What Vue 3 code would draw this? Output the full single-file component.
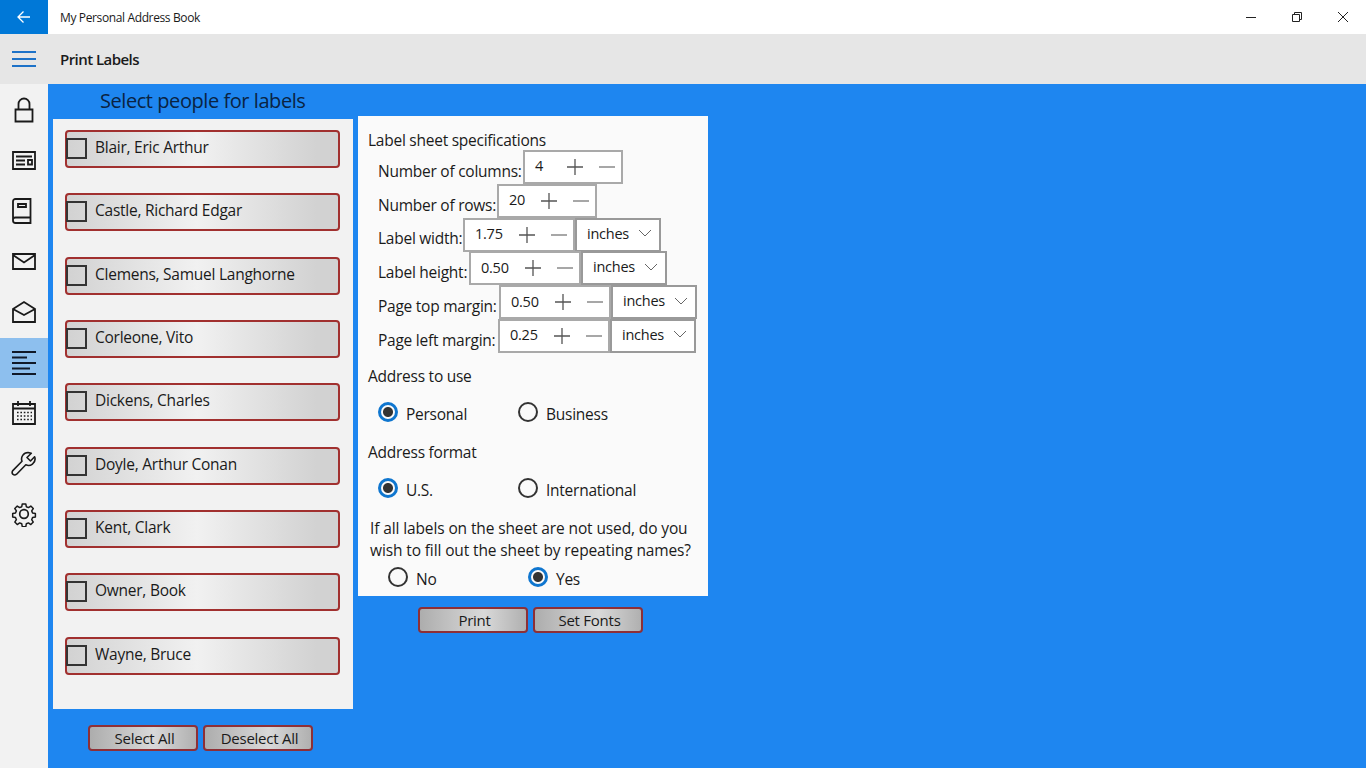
<script setup>
const people = ['Blair, Eric Arthur','Castle, Richard Edgar','Clemens, Samuel Langhorne','Corleone, Vito','Dickens, Charles','Doyle, Arthur Conan','Kent, Clark','Owner, Book','Wayne, Bruce']
const specs = [
  { label: 'Number of columns:', w: 145, value: '4', stepper: 100, pad: 10, unit: false },
  { label: 'Number of rows:', w: 119, value: '20', stepper: 100, pad: 10, unit: false },
  { label: 'Label width:', w: 85, value: '1.75', stepper: 112, pad: 10, unit: true },
  { label: 'Label height:', w: 91, value: '0.50', stepper: 112, pad: 10, unit: true },
  { label: 'Page top margin:', w: 121, value: '0.50', stepper: 112, pad: 10, unit: true },
  { label: 'Page left margin:', w: 120, value: '0.25', stepper: 112, pad: 10, unit: true }
]
</script>

<template>
  <div class="app">
    <header class="titlebar">
      <div class="back">
        <svg width="16" height="16" viewBox="0 0 16 16" fill="none" stroke="#fff" stroke-width="1.3"><path d="M14 8H2M7.500 2.500 2 8l5.500 5.500"/></svg>
      </div>
      <span class="apptitle">My Personal Address Book</span>
      <div class="winctrls">
        <svg width="12" height="12" viewBox="0 0 12 12" fill="none" stroke="#222" stroke-width="1"><path d="M1 6.500h10"/></svg>
        <svg width="12" height="12" viewBox="0 0 12 12" fill="none" stroke="#222" stroke-width="1"><path d="M1.500 3.500h7v7h-7zM3.500 3.500v-2h7v7h-2"/></svg>
        <svg width="12" height="12" viewBox="0 0 12 12" fill="none" stroke="#222" stroke-width="1"><path d="M1 1l10 10M11 1 1 11"/></svg>
      </div>
    </header>
    <div class="cmdbar">
      <div class="burger"><span></span><span></span><span></span></div>
      <span class="pagetitle">Print Labels</span>
    </div>
    <div class="body">
      <nav class="nav">
        <div class="navitem">
          <svg width="24" height="26" viewBox="0 0 24 26" fill="none" stroke="#1a1a1a" stroke-width="1.800"><path d="M3.500 12.500h17v12h-17zM6.500 12.500V7a5.500 5.500 0 0 1 11 0v5.500"/></svg>
        </div>
        <div class="navitem">
          <svg width="24" height="20" viewBox="0 0 24 20" fill="none" stroke="#1a1a1a" stroke-width="1.800"><path d="M1 1h22v17H1zM4 5.500h16M4 9.500h9M4 13.500h9"/><path d="M16 9h4v4.500h-4z"/></svg>
        </div>
        <div class="navitem">
          <svg class="bookicon" width="20" height="26" viewBox="0 0 20 26" fill="none" stroke="#1a1a1a" stroke-width="1.800"><path d="M3.500 1h15v24H3.500A2.500 2.500 0 0 1 1 22.500V3.500A2.500 2.500 0 0 1 3.500 1zM1 21.500c0-1 1-2 2.500-2h15M6 6h8v3H6z"/></svg>
        </div>
        <div class="navitem">
          <svg width="24" height="18" viewBox="0 0 24 18" fill="none" stroke="#1a1a1a" stroke-width="1.800"><path d="M1 1h22v15H1zM1 2l11 7.500L23 2"/></svg>
        </div>
        <div class="navitem">
          <svg width="24" height="24" viewBox="0 0 24 24" fill="none" stroke="#1a1a1a" stroke-width="1.800"><path d="M1 9 12 2l11 7v13H1zM1 9l11 6 11-6"/></svg>
        </div>
        <div class="navitem active">
          <svg width="24" height="24" viewBox="0 0 24 24" fill="none" stroke="#101828" stroke-width="2"><path d="M0 1h24M0 6.500h15M0 12h24M0 17.500h18M0 23h24"/></svg>
        </div>
        <div class="navitem">
          <svg width="24" height="24" viewBox="0 0 24 24" fill="none" stroke="#1a1a1a" stroke-width="1.800"><path d="M1 3h22v20H1zM1 7.500h22M6 0v5M18 0v5"/><path stroke-width="1.600" stroke-dasharray="1.600 1.800" d="M5 11.500h15M5 15h15M5 18.500h15"/></svg>
        </div>
        <div class="navitem">
          <svg width="26" height="26" viewBox="0 0 26 26" fill="none" stroke="#1a1a1a" stroke-width="1.600" stroke-linejoin="round"><path d="M17 1.500a6.500 6.500 0 0 0-6 8.800L1.800 19.600a3 3 0 0 0 0 3.600 3 3 0 0 0 3.800 0l9.200-9.400A6.500 6.500 0 0 0 24 7l-.4-1.200L19.500 10 16 6.500l4.300-4.200z"/></svg>
        </div>
        <div class="navitem">
          <svg width="26" height="26" viewBox="0 0 26 26" fill="none" stroke="#1a1a1a" stroke-width="1.700" stroke-linejoin="round"><circle cx="13" cy="13" r="4.300"/><path d="M11 1.500h4l.6 3.200 2.400 1 2.700-1.800 2.800 2.800-1.800 2.700 1 2.400 3.200.6v4l-3.200.6-1 2.400 1.800 2.700-2.800 2.800-2.700-1.800-2.400 1-.6 3.200h-4l-.6-3.200-2.400-1-2.700 1.800-2.800-2.800 1.800-2.700-1-2.400-3.200-.6v-4l3.200-.6 1-2.400-1.800-2.700 2.800-2.800 2.700 1.800 2.400-1z" transform="translate(1.600 1.600) scale(.88)"/></svg>
        </div>
      </nav>
      <main class="main">
        <section class="left">
          <h2 class="heading">Select people for labels</h2>
          <div class="list">
            <div v-for="p in people" :key="p" class="person">
              <span class="check"></span>
              <span class="pname">{{ p }}</span>
            </div>
          </div>
          <div class="actions leftactions">
            <button class="btn">Select All</button>
            <button class="btn">Deselect All</button>
          </div>
        </section>
        <section class="right">
          <div class="sheet">
            <div class="caption">Label sheet specifications</div>
            <div class="specs">
              <div v-for="s in specs" :key="s.label" class="spec">
                <span class="speclabel" :style="{ width: s.w + 'px' }">{{ s.label }}</span>
                <div class="stepper" :style="{ width: s.stepper + 'px' }">
                  <span class="val" :style="{ paddingLeft: s.pad + 'px' }">{{ s.value }}</span>
                  <svg class="pm" width="16" height="16" viewBox="0 0 16 16" stroke="#555" stroke-width="1.300"><path d="M0 8h16M8 0v16"/></svg>
                  <svg class="pm minus" width="16" height="16" viewBox="0 0 16 16" stroke="#777" stroke-width="1.300"><path d="M0 8h16"/></svg>
                </div>
                <div v-if="s.unit" class="unit">
                  <span>inches</span>
                  <svg width="14" height="8" viewBox="0 0 14 8" fill="none" stroke="#666" stroke-width="1"><path d="M1 1l6 6 6-6"/></svg>
                </div>
              </div>
            </div>
            <div class="caption c2">Address to use</div>
            <div class="radios">
              <div class="radio"><span class="dot on"></span><span>Personal</span></div>
              <div class="radio"><span class="dot"></span><span>Business</span></div>
            </div>
            <div class="caption c3">Address format</div>
            <div class="radios">
              <div class="radio"><span class="dot on"></span><span>U.S.</span></div>
              <div class="radio"><span class="dot"></span><span>International</span></div>
            </div>
            <p class="question">If all labels on the sheet are not used, do you<br>wish to fill out the sheet by repeating names?</p>
            <div class="radios r3">
              <div class="radio"><span class="dot"></span><span>No</span></div>
              <div class="radio"><span class="dot on"></span><span>Yes</span></div>
            </div>
          </div>
          <div class="actions rightactions">
            <button class="btn">Print</button>
            <button class="btn">Set Fonts</button>
          </div>
        </section>
      </main>
    </div>
  </div>
</template>

<style>
html, body { margin: 0; background: #1e86f0; }
</style>

<style scoped>
.app { width: 1366px; height: 768px; display: flex; flex-direction: column; overflow: hidden; font-family: "Open Sans", "Noto Sans", sans-serif; color: #1a1a1a; }
.titlebar { height: 34px; background: #fff; display: flex; align-items: center; flex: none; }
.back { width: 48px; height: 34px; background: #0078d7; display: flex; align-items: center; justify-content: center; }
.apptitle { margin-left: 12px; font-size: 12px; letter-spacing: -.37px; }
.winctrls { margin-left: auto; display: flex; gap: 34px; padding-right: 17px; align-items: center; }
.cmdbar { height: 50px; background: #e6e6e6; display: flex; align-items: center; flex: none; }
.burger { width: 48px; display: flex; flex-direction: column; align-items: center; gap: 5.400px; }
.burger span { display: block; width: 24px; height: 2px; background: #1d72c8; }
.pagetitle { margin-left: 12px; font-size: 15px; font-weight: 600; letter-spacing: -.55px; }
.body { flex: 1; display: flex; min-height: 0; }
.nav { width: 48px; background: #f2f2f2; display: flex; flex-direction: column; flex: none; padding-top: 1px; }
.navitem { height: 50.500px; display: flex; align-items: center; justify-content: center; }
.navitem.active { background: #8dbfee; }
.bookicon { margin-right: 4px; }
.main { flex: 1; background: #1e86f0; display: flex; padding-left: 5px; gap: 5px; align-items: flex-start; }
.left { width: 300px; display: flex; flex-direction: column; }
.heading { margin: 0; height: 35px; padding-left: 47px; font-size: 20px; font-weight: 400; line-height: 33px; color: #0a2342; letter-spacing: -.44px; }
.list { height: 590px; box-sizing: border-box; background: #f2f2f2; padding: 11px 13px 0 12px; display: flex; flex-direction: column; gap: 25.330px; }
.person { height: 38px; box-sizing: border-box; border: 2px solid #a1302f; border-radius: 4px; background: linear-gradient(90deg, #d2d2d2 0%, #f1f1f1 48%, #d2d2d2 92%); display: flex; align-items: flex-start; }
.check { width: 21px; height: 21px; box-sizing: border-box; border: 2px solid #333; margin: 6px 0 0 -1px; flex: none; }
.pname { margin-left: 8px; font-size: 15.500px; line-height: 31px; letter-spacing: -.25px; white-space: nowrap; }
.actions { display: flex; gap: 5px; }
.leftactions { padding: 16px 0 0 35px; }
.rightactions { padding: 11px 0 0 60px; }
.btn { width: 110px; height: 26px; box-sizing: border-box; padding: 0 0 0 3px; border: 2px solid #8e2f36; border-radius: 4px; background: linear-gradient(90deg, #adadad 0%, #d9d9d9 60%, #b0b0b0 100%); font: inherit; font-size: 15px; letter-spacing: -.25px; color: #1a1a1a; }
.right { width: 350px; padding-top: 32px; }
.sheet { height: 480px; box-sizing: border-box; background: #fafafa; padding: 13px 0 0 10px; font-size: 15.500px; letter-spacing: -.25px; }
.caption { line-height: 22px; }
.specs { display: flex; flex-direction: column; padding: 0 0 0 10px; margin-top: -1px; }
.spec { height: 33.800px; display: flex; align-items: center; }
.speclabel { line-height: 22px; padding-top: 8px; white-space: nowrap; flex: none; }
.stepper { height: 34px; box-sizing: border-box; border: 2px solid #a9a9a9; background: #fff; display: flex; align-items: center; flex: none; }
.val { flex: 1; font-size: 14.500px; margin-top: -2px; }
.pm { flex: none; }
.pm.minus { margin-left: 16px; margin-right: 6px; }
.unit { width: 86px; height: 34px; box-sizing: border-box; border: 2px solid #999; background: #fff; display: flex; align-items: center; justify-content: space-between; padding: 0 7px 3px 10px; font-size: 14.500px; flex: none; }
.c2 { margin-top: 12px; }
.c3 { margin-top: 13px; }
.radios { display: flex; padding-left: 10px; margin-top: 14px; height: 27px; }
.radio { width: 140px; display: flex; align-items: center; gap: 8px; }
.dot { width: 20px; height: 20px; box-sizing: border-box; border: 2px solid #333; border-radius: 50%; margin-top: -5px; flex: none; }
.dot.on { border: 3px solid #0f76cf; background: radial-gradient(circle, #333 0 4.500px, #fafafa 5.500px); }
.question { margin: 13px 0 0 2px; line-height: 22px; letter-spacing: -.12px; }
.r3 { padding-left: 20px; margin-top: 5px; }
</style>
